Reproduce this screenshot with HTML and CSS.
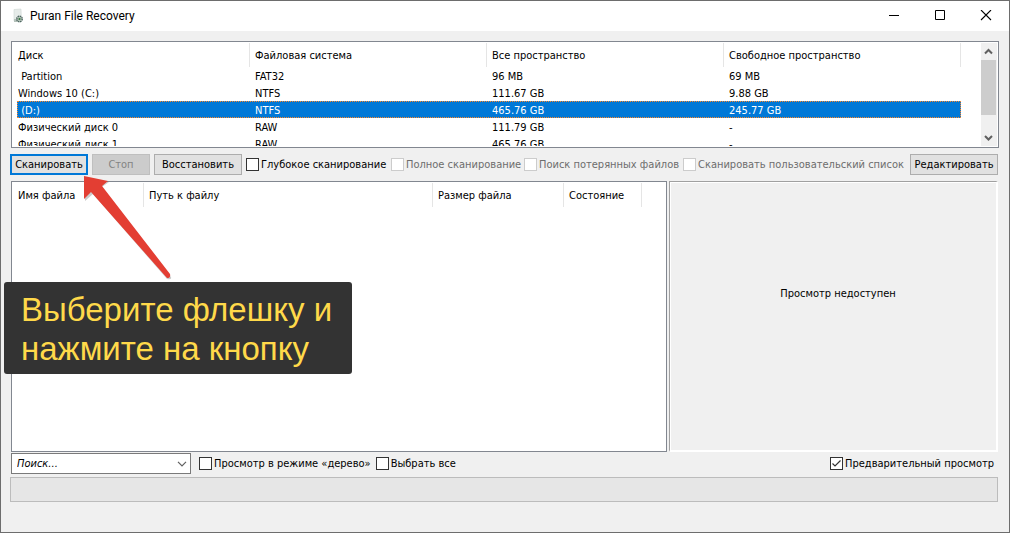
FILE: index.html
```html
<!DOCTYPE html>
<html lang="ru">
<head>
<meta charset="utf-8">
<title>Puran File Recovery</title>
<link rel="stylesheet" href="styles.css">
</head>
<body>
<div class="window">
  <header class="titlebar">
    <svg class="app-icon" width="16" height="16" viewBox="0 0 16 16" aria-hidden="true">
      <path d="M4 1.500l7-.5.500 12H4z" fill="#e6ebe9" stroke="#cfd6d3" stroke-width=".6"/>
      <path d="M4 11h5v3H4z" fill="#b4c1ba"/>
      <circle cx="9.500" cy="11" r="2.700" fill="#d5ddd6" stroke="#4d6660" stroke-width="1.500" stroke-dasharray="1.500 .6"/>
      <circle cx="9.500" cy="11" r="1.200" fill="#3f7a4a"/>
    </svg>
    <h1 class="title">Puran File Recovery</h1>
    <div class="window-controls">
      <button class="control" type="button" aria-label="Свернуть"><svg width="12" height="12" viewBox="0 0 12 12"><path d="M1 5.500h10" stroke="#000"/></svg></button>
      <button class="control" type="button" aria-label="Развернуть"><svg width="12" height="12" viewBox="0 0 12 12"><path d="M1.500 .5h9v9h-9z" fill="none" stroke="#000"/></svg></button>
      <button class="control" type="button" aria-label="Закрыть"><svg width="12" height="12" viewBox="0 0 12 12"><path d="M1 0l10 10M11 0L1 10" stroke="#000" stroke-width="1.100"/></svg></button>
    </div>
  </header>

  <main class="client">
    <section class="list disks">
      <div class="viewport">
        <table class="grid">
          <colgroup><col class="c-disk"><col class="c-info"><col class="c-info"><col class="c-info"></colgroup>
          <thead>
            <tr><th>Диск</th><th>Файловая система</th><th>Все пространство</th><th>Свободное пространство</th></tr>
          </thead>
          <tbody>
            <tr><td>&nbsp;Partition</td><td>FAT32</td><td>96 MB</td><td>69 MB</td></tr>
            <tr><td>Windows 10 (C:)</td><td>NTFS</td><td>111.67 GB</td><td>9.88 GB</td></tr>
            <tr class="selected"><td>&nbsp;(D:)</td><td>NTFS</td><td>465.76 GB</td><td>245.77 GB</td></tr>
            <tr><td>Физический диск 0</td><td>RAW</td><td>111.79 GB</td><td>-</td></tr>
            <tr><td>Физический диск 1</td><td>RAW</td><td>465.76 GB</td><td>-</td></tr>
          </tbody>
        </table>
      </div>
      <div class="scrollbar" aria-hidden="true">
        <svg width="15" height="17" viewBox="0 0 15 17"><path d="M4 10.500l3.500-3.500 3.500 3.500" fill="none" stroke="#606060" stroke-width="2"/></svg>
        <div class="thumb"></div>
        <svg width="15" height="17" viewBox="0 0 15 17"><path d="M4 7l3.500 3.500L11 7" fill="none" stroke="#606060" stroke-width="2"/></svg>
      </div>
    </section>

    <div class="toolbar">
      <button class="btn btn-focus w-scan" type="button">Сканировать</button>
      <button class="btn w-stop" type="button" disabled>Стоп</button>
      <button class="btn w-wide" type="button">Восстановить</button>
      <div class="options">
        <label class="check"><input type="checkbox">Глубокое сканирование</label>
        <label class="check off"><input type="checkbox" disabled>Полное сканирование</label>
        <label class="check off"><input type="checkbox" disabled>Поиск потерянных файлов</label>
        <label class="check off"><input type="checkbox" disabled>Сканировать пользовательский список</label>
      </div>
      <button class="btn w-wide" type="button">Редактировать</button>
    </div>

    <div class="workspace">
      <section class="list files">
        <table class="grid">
          <colgroup><col class="c-name"><col class="c-path"><col class="c-size"><col class="c-state"></colgroup>
          <thead>
            <tr><th>Имя файла</th><th>Путь к файлу</th><th>Размер файла</th><th>Состояние</th></tr>
          </thead>
        </table>
      </section>
      <section class="preview">Просмотр недоступен</section>
      <div class="callout">
        <svg class="arrow" width="100" height="112" viewBox="0 0 100 112" aria-hidden="true">
          <path class="arrow-shadow" d="M4 4l24 5-7 5 69 90q1 3-4 2L12 21l-8 7z"/>
          <path class="arrow-body" d="M3 3l24 5-6 5 68 88q1 4-3 4L10 19l-7 7z"/>
        </svg>
        <p class="callout-text">Выберите флешку и<br>нажмите на кнопку</p>
      </div>
    </div>

    <div class="footer">
      <select class="search" aria-label="Поиск"><option>Поиск...</option></select>
      <label class="check"><input type="checkbox">Просмотр в режиме «дерево»</label>
      <label class="check"><input type="checkbox">Выбрать все</label>
      <label class="check end"><input type="checkbox" checked>Предварительный просмотр</label>
    </div>
    <div class="progress" role="progressbar" aria-label="Ход сканирования"></div>
  </main>
</div>
</body>
</html>
```
FILE: styles.css
```css
* { box-sizing: border-box; }

body {
  margin: 0;
  font: 11px/13px Tahoma, "DejaVu Sans Condensed", "DejaVu Sans", sans-serif;
  color: #000;
}

button, input, select { font: inherit; color: inherit; margin: 0; }

.window {
  display: flex;
  flex-direction: column;
  min-height: 100vh;
  border: 1px solid #6d6d6d;
  background: #f0f0f0;
}

.titlebar {
  display: flex;
  align-items: center;
  height: 30px;
  padding-left: 9px;
  background: #fff;
}
.app-icon { margin-right: 4px; }
.title {
  flex: 1;
  margin: 0;
  font: 12px/16px "Segoe UI", Roboto, sans-serif;
}
.window-controls { display: flex; }
.control {
  display: grid;
  place-items: center;
  width: 46px;
  height: 28px;
  padding: 0;
  border: 0;
  background: none;
}

.client {
  flex: 1;
  display: flex;
  flex-direction: column;
  padding: 10px 11px 30px 9px;
}

.list {
  border: 1px solid #828790;
  background: #fff;
  overflow: hidden;
}
.disks {
  display: flex;
  height: 107px;
  margin: 0 -1px 0 1px;
  padding: 1px;
}
.viewport { flex: 1; overflow: hidden; }

.grid {
  table-layout: fixed;
  width: 1px;
  border-collapse: separate;
  border-spacing: 0;
}
.disks .grid { margin-left: 4px; }
.files .grid { margin: 1px 0 0 5px; }
.grid th, .grid td {
  height: 17px;
  padding: 0 0 0 5px;
  text-align: left;
  font-weight: normal;
  white-space: nowrap;
}
.grid td { padding-top: 2px; }
.grid th { height: 24px; border-right: 1px solid #e5e5e5; }
.grid td:first-child,
.grid th:first-child { padding-left: 1px; }
.c-disk { width: 233px; }
.c-info { width: 237px; }
.c-name { width: 127px; }
.c-path { width: 289px; }
.c-size { width: 131px; }
.c-state { width: 78px; }
.selected {
  background: #0078d7;
  color: #fff;
  outline: 1px dotted #ff8728;
  outline-offset: -1px;
}

.scrollbar {
  display: flex;
  flex-direction: column;
  width: 16px;
  background: #f0f0f0;
}
.thumb { width: 15px; height: 55px; background: #cdcdcd; }
.scrollbar svg:last-child { margin-top: auto; }

.toolbar {
  display: flex;
  align-items: center;
  gap: 4px;
  padding: 6px 0;
}
.btn {
  flex-shrink: 0;
  height: 21px;
  padding: 0;
  border: 1px solid #adadad;
  background: #e1e1e1;
  text-align: center;
  white-space: nowrap;
}
.btn:disabled { border-color: #bfbfbf; background: #ccc; color: #838383; }
.btn-focus { border: 2px solid #0078d7; }
.w-scan { width: 78px; }
.w-stop { width: 58px; }
.w-wide { width: 88px; }

.options {
  flex: 1;
  min-width: 0;
  display: grid;
  grid-template-columns: 145px 133px 159px 1fr;
}
.check {
  display: flex;
  align-items: center;
  gap: 2px;
  white-space: nowrap;
}
.check input {
  appearance: none;
  width: 13px;
  height: 13px;
  border: 1px solid #333;
  background: #fff;
}
.check input:checked {
  background: #fff url("data:image/svg+xml,%3Csvg xmlns='http://www.w3.org/2000/svg' viewBox='0 0 11 11'%3E%3Cpath d='M1.500 5.500L4 8l5.500-5.500' fill='none' stroke='%23333' stroke-width='1.200'/%3E%3C/svg%3E") center / 11px 11px no-repeat;
}
.off { color: #6d6d6d; }
.check.off input { border-color: #ccc; }

.workspace {
  flex: 1;
  position: relative;
  display: flex;
  gap: 2px;
  margin-left: 1px;
}
.files { flex: 1; }
.preview {
  flex: 0 0 33.333%;
  display: grid;
  place-items: center;
  padding: 0 0 46px 10px;
  border: solid;
  border-width: 1px 2px 2px 1px;
  border-color: #a0a0a0 #fff #fff #a0a0a0;
  box-shadow: inset 1px 1px #fff;
}

.callout {
  position: absolute;
  left: -7px;
  top: 101px;
}
.arrow { position: absolute; left: 77px; bottom: 89px; }
.arrow-body { fill: #e33e33; }
.arrow-shadow { fill: #000; opacity: .2; }
.callout-text {
  position: relative;
  margin: 0;
  width: 348px;
  padding: 8px 17px 6px;
  border-radius: 3px;
  background: #333;
  color: #ffd94a;
  font: 33px/39px "Liberation Sans", Arial, sans-serif;
  white-space: nowrap;
}

.footer {
  display: flex;
  align-items: center;
  gap: 8px;
  margin: 1px 0 3px 1px;
}
.footer .check + .check { margin-left: -3px; }
.footer .check.end { margin: 0 4px 0 auto; }
.search {
  appearance: none;
  width: 180px;
  height: 21px;
  padding: 0 5px;
  border: 1px solid #7a7a7a;
  border-radius: 0;
  background: #fff url("data:image/svg+xml,%3Csvg xmlns='http://www.w3.org/2000/svg' viewBox='0 0 10 6'%3E%3Cpath d='M1 .8l4 4 4-4' fill='none' stroke='%23606060' stroke-width='1.200'/%3E%3C/svg%3E") right 3px center / 10px 6px no-repeat;
  font-style: italic;
}

.progress {
  height: 25px;
  border: 1px solid #bcbcbc;
  background: #e6e6e6;
}
```
